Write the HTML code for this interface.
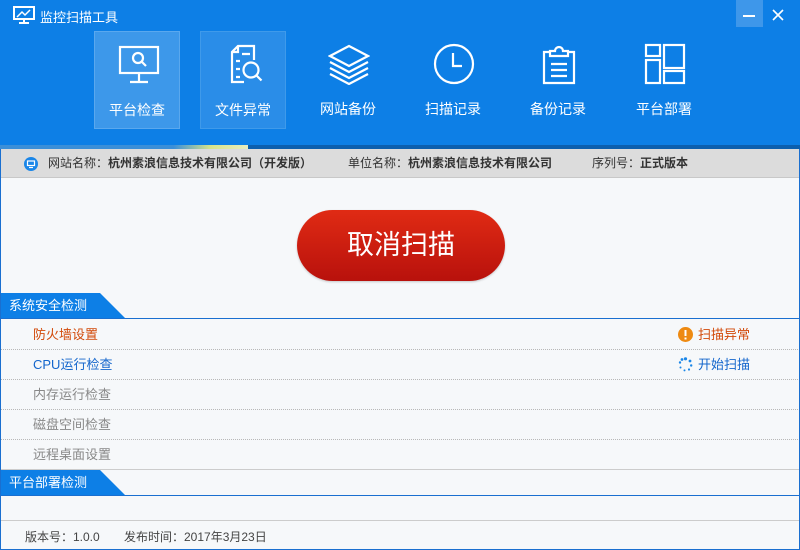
<!DOCTYPE html>
<html><head><meta charset="utf-8"><style>
*{margin:0;padding:0;box-sizing:border-box}
body{width:800px;height:550px;overflow:hidden;font-family:"Liberation Sans","Microsoft YaHei","Noto Sans CJK SC",sans-serif;font-size:13px;position:relative;background:#f6f8fa}
.hdr{position:absolute;left:0;top:0;width:800px;height:145px;background:#0d7fe6}
.title{position:absolute;left:40px;top:7px;color:#fff;font-size:13px}
.tile{position:absolute;top:31px;width:86px;height:98px;color:#fff;text-align:center}
.tile span{position:absolute;left:0;right:0;top:68px;font-size:14px}
.tile svg{position:absolute;left:23px;top:12px}
.prog{position:absolute;left:0;top:145px;width:800px;height:4px;background:#0c5fae}
.prog i{position:absolute;left:0;top:0;width:248px;height:4px;background:linear-gradient(90deg,#3b8fd8 0,#3b8fd8 70%,#d8e48a 85%,#e8edc0 100%)}
.info{position:absolute;left:0;top:149px;width:800px;height:29px;background:#dcdcdc;border-bottom:1px solid #c8c8c8;color:#333;font-size:12px;line-height:29px}
.info b{font-weight:bold}
.frame{position:absolute;left:0;top:149px;width:800px;height:401px;border:1px solid #1a6fd0;border-top:none;pointer-events:none}
.sec{position:absolute;left:0;width:800px;height:26px;border-bottom:1px solid #1a6fd0}
.sec div{position:absolute;left:0;top:0;height:25px;width:125px;background:#0d7fe6;clip-path:polygon(0 0,100px 0,125px 25px,0 25px);color:#fff;font-size:13px;line-height:25px;padding-left:9px}
.row{position:absolute;left:0;width:800px;height:30px;border-bottom:1px dotted #b8b8b8;line-height:30px;padding-left:33px;font-size:13px}
.st{position:absolute;left:678px;top:0;font-size:13px}
.btn{position:absolute;left:297px;top:210px;width:208px;height:71px;border-radius:36px;background:linear-gradient(#e02b14,#b8110c);color:#fff;font-size:27px;text-align:center;line-height:71px;box-shadow:0 1px 2px rgba(0,0,0,.2)}
</style></head><body>
<div class="hdr">
 <svg style="position:absolute;left:13px;top:6px" width="22" height="18" viewBox="0 0 22 18" fill="none" stroke="#fff" stroke-width="2"><rect x="1" y="1" width="20" height="12"/><path d="M4 11l5-5 3 3 5-5" stroke-width="1.5"/><path d="M11 13v3M6 17h10"/></svg>
 <div class="title">监控扫描工具</div>
 <div style="position:absolute;left:736px;top:0;width:27px;height:27px;background:#3e97ea"></div>
 <div style="position:absolute;left:743px;top:15px;width:12px;height:1.5px;background:#fff"></div>
 <svg style="position:absolute;left:772px;top:9px" width="12" height="12"><path d="M1 1l10 10M11 1L1 11" stroke="#fff" stroke-width="1.6"/></svg>
 <div class="tile" style="left:94px;background:#3d98ea;border:1px solid #5aa8ee"><svg width="42" height="42" viewBox="0 0 42 42" fill="none" stroke="#fff" stroke-width="2.2"><rect x="2" y="3" width="38" height="26"/><circle cx="20" cy="14" r="5"/><path d="M24 18l4 4M21 29v8M12 38h18"/></svg><span>平台检查</span></div>
 <div class="tile" style="left:200px;background:#2a8de8;border:1px solid #3f9aea"><svg width="42" height="42" viewBox="0 0 42 42" fill="none" stroke="#fff" stroke-width="2.2"><path d="M30 16V2H14L8 8v30h12"/><path d="M14 2v6H8"/><path d="M18 10h8M12 17h4M12 25h4M12 33h4"/><circle cx="27" cy="26" r="7.5"/><path d="M32.5 31.5l5 5"/></svg><span>文件异常</span></div>
 <div class="tile" style="left:305px"><svg width="42" height="42" viewBox="0 0 42 42" fill="none" stroke="#fff" stroke-width="2.2"><path d="M21 3l19 10-19 10L2 13z"/><path d="M2 19l19 10 19-10M2 25l19 10 19-10M2 31l19 10 19-10"/></svg><span>网站备份</span></div>
 <div class="tile" style="left:410px"><svg width="42" height="42" viewBox="0 0 42 42" fill="none" stroke="#fff" stroke-width="2.2"><circle cx="21" cy="21" r="19"/><path d="M20 10v13h9"/></svg><span>扫描记录</span></div>
 <div class="tile" style="left:515px"><svg width="42" height="42" viewBox="0 0 42 42" fill="none" stroke="#fff" stroke-width="2.2"><path d="M12 9H6v31h30V9h-6"/><path d="M12 13V8h5a4 4 0 0 1 8 0h5v5z"/><path d="M13 21h16M13 27h16M13 33h16"/></svg><span>备份记录</span></div>
 <div class="tile" style="left:621px"><svg width="42" height="42" viewBox="0 0 42 42" fill="none" stroke="#fff" stroke-width="2.2"><rect x="2" y="2" width="14" height="11"/><rect x="2" y="17" width="14" height="23"/><rect x="20" y="2" width="20" height="23"/><rect x="20" y="28" width="20" height="12"/></svg><span>平台部署</span></div>
</div>
<div class="prog"><i></i></div>
<div class="info">
 <svg style="position:absolute;left:24px;top:8px" width="14" height="14" viewBox="0 0 14 14"><circle cx="7" cy="7" r="7" fill="#1a86e8"/><rect x="3.5" y="4" width="7" height="4.5" fill="none" stroke="#fff" stroke-width="1.2"/><path d="M5 10.5h4" stroke="#fff" stroke-width="1.2"/></svg>
 <span style="position:absolute;left:48px">网站名称：<b>杭州素浪信息技术有限公司（开发版）</b></span>
 <span style="position:absolute;left:348px">单位名称：<b>杭州素浪信息技术有限公司</b></span>
 <span style="position:absolute;left:592px">序列号：<b>正式版本</b></span>
</div>
<div class="btn">取消扫描</div>
<div class="sec" style="top:293px"><div>系统安全检测</div></div>
<div class="row" style="top:320px;color:#d24a0a">防火墙设置<span class="st" style="color:#d24a0a"><svg style="vertical-align:-3px;margin-right:5px" width="15" height="15"><circle cx="7.5" cy="7.5" r="7.5" fill="#ee8a12"/><rect x="6.5" y="3" width="2" height="6" fill="#fff"/><rect x="6.5" y="10.5" width="2" height="2" fill="#fff"/></svg>扫描异常</span></div>
<div class="row" style="top:350px;color:#1466cc">CPU运行检查<span class="st" style="color:#1466cc"><svg style="vertical-align:-3px;margin-right:5px" width="15" height="15" fill="#1a86e8"><circle cx="7.5" cy="1.8" r="1.6"/><circle cx="12" cy="4" r="1.4"/><circle cx="13.2" cy="8.5" r="1.2"/><circle cx="11" cy="12.5" r="1.1"/><circle cx="6.5" cy="13.4" r="1"/><circle cx="2.5" cy="10.5" r="1"/><circle cx="2" cy="5.5" r="1.2"/><circle cx="4" cy="2.5" r="1.4"/></svg>开始扫描</span></div>
<div class="row" style="top:380px;color:#888">内存运行检查</div>
<div class="row" style="top:410px;color:#888">磁盘空间检查</div>
<div class="row" style="top:440px;color:#888;border-bottom:1px solid #ccc">远程桌面设置</div>
<div class="sec" style="top:470px"><div>平台部署检测</div></div>
<div style="position:absolute;left:0;top:520px;width:800px;border-top:1px solid #ccc"></div>
<div style="position:absolute;left:25px;top:528px;font-size:12px;color:#444">版本号：1.0.0</div>
<div style="position:absolute;left:124px;top:528px;font-size:12px;color:#444">发布时间：2017年3月23日</div>
<div class="frame"></div>
</body></html>
